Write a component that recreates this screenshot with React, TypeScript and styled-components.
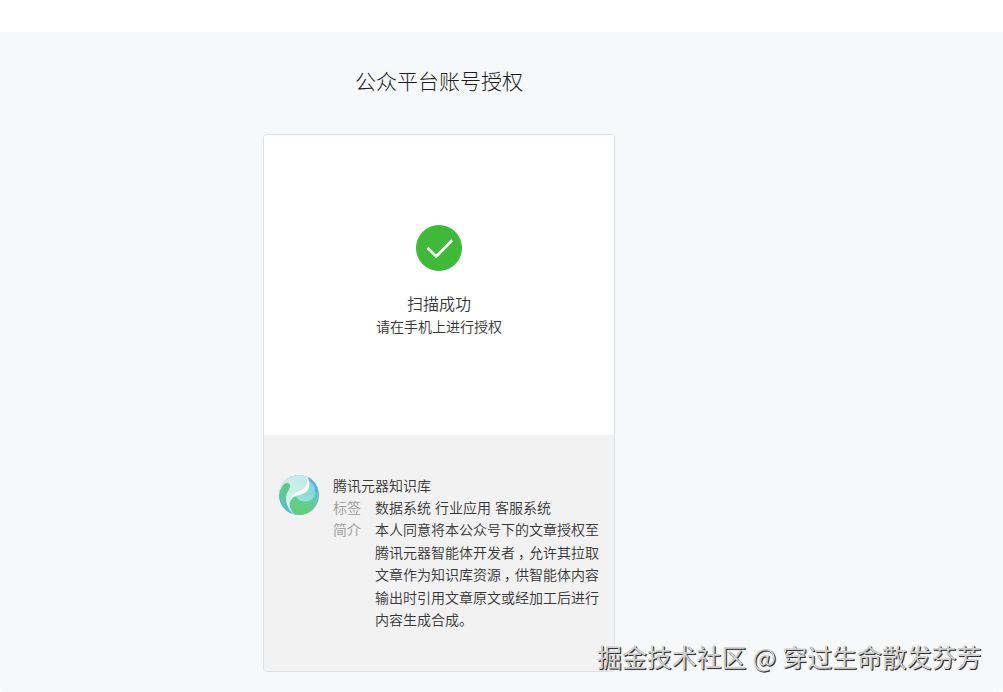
import React from "react";
import styled, { createGlobalStyle } from "styled-components";

const GlobalStyle = createGlobalStyle`
  * { box-sizing: border-box; }
  body {
    margin: 0;
    background: #fff;
    color: #353535;
    font-family: "Noto Sans CJK SC", sans-serif;
    font-size: 14px;
    line-height: 22.4px;
    font-weight: 350;
    overflow: hidden;
  }
`;

const Screen = styled.div`
  position: relative;
  width: 1003px;
  height: 692px;
  padding-top: 32px;
`;

const Page = styled.main`
  display: flex;
  flex-direction: column;
  align-items: center;
  height: 660px;
  padding-right: 125px;
  background: #f6f8f9;
  border-radius: 0 0 6px 6px;
`;

const Title = styled.h1`
  margin: 31px 0 37px;
  color: #1c1c1c;
  font-size: 21px;
  line-height: 34px;
  font-weight: 300;
`;

const Card = styled.section`
  display: flex;
  flex-direction: column;
  width: 352px;
  height: 538px;
  border: 1px solid #dddfe0;
  border-radius: 4px;
  overflow: hidden;
`;

const Result = styled.div`
  display: flex;
  flex-direction: column;
  align-items: center;
  height: 300px;
  padding-top: 90px;
  background: #fff;
`;

const CheckIcon = styled.svg`
  width: 46px;
  height: 46px;
  margin-bottom: 20px;
`;

const ResultTitle = styled.p`
  margin: 0;
  font-size: 16px;
  line-height: 24px;
`;

const ResultHint = styled.p`
  margin: 0;
  line-height: 22px;
`;

const Account = styled.div`
  display: flex;
  flex: 1;
  gap: 14px;
  padding: 40px 0 0 15px;
  background: #f2f2f2;
`;

const Logo = styled.svg`
  flex: none;
  width: 40px;
  height: 40px;
`;

const Details = styled.div`
  display: flex;
  flex-direction: column;
  margin-top: -1.5px;
  white-space: nowrap;
`;

const DetailRow = styled.div`
  display: flex;
  gap: 14px;
`;

const Label = styled.span`
  width: 28px;
  color: #9a9a9a;
`;

const Value = styled.div`
  word-spacing: 0.9px;
`;

const Comma = styled.span`
  padding: 0 4px 0 3px;
  font-feature-settings: "halt";
`;

const Watermark = styled.div`
  position: absolute;
  left: 597px;
  top: 638px;
  font-size: 24.9px;
  line-height: 36px;
  font-weight: 400;
  word-spacing: 0.6px;
  white-space: nowrap;
  color: #d0d0d0;
  text-shadow: 1px 1px 0 #333, 1px 1px 1px rgba(0, 0, 0, 0.5);
`;

const intro = [
  "本人同意将本公众号下的文章授权至",
  "腾讯元器智能体开发者，允许其拉取",
  "文章作为知识库资源，供智能体内容",
  "输出时引用文章原文或经加工后进行",
  "内容生成合成。",
];

function IntroLine({ text }: { text: string }) {
  const [before, after] = text.split("，");
  return (
    <div>
      {before}
      {after && <Comma>，</Comma>}
      {after}
    </div>
  );
}

function AccountLogo() {
  return (
    <Logo viewBox="0 0 40 40">
      <defs>
        <linearGradient id="rim" x1="0" y1="1" x2="1" y2="0">
          <stop offset="0.3" stopColor="#5cc4c0" />
          <stop offset="0.8" stopColor="#58afe2" />
        </linearGradient>
        <linearGradient id="leaf" x1="0.3" y1="1" x2="0.8" y2="0">
          <stop offset="0.2" stopColor="#62cf78" />
          <stop offset="1" stopColor="#5fcabf" />
        </linearGradient>
        <linearGradient id="mist" x1="0" y1="1" x2="1" y2="0">
          <stop offset="0" stopColor="#ddf5e4" />
          <stop offset="1" stopColor="#bde9ea" />
        </linearGradient>
        <linearGradient id="pool" x1="0" y1="1" x2="1" y2="0">
          <stop offset="0" stopColor="#a0e3cd" />
          <stop offset="1" stopColor="#79d3e2" />
        </linearGradient>
        <linearGradient id="edge" x1="0" y1="0" x2="0" y2="1">
          <stop offset="0" stopColor="#62c980" />
          <stop offset="0.45" stopColor="#5dc7a0" />
          <stop offset="1" stopColor="#58b4e4" />
        </linearGradient>
        <clipPath id="disc"><circle cx="20" cy="20" r="20" /></clipPath>
      </defs>
      <g clipPath="url(#disc)">
        <rect width="40" height="40" fill="url(#rim)" />
        <path d="M0 0H27C31 5 32 13 26 17C20 19 12 20 11 27C10 32 12 36 16 40H8L0 20Z" fill="url(#mist)" />
        <path d="M11 28C13 19 21 22 24 17H39C40 31 31 40 20 40C14 38 11 34 11 28Z" fill="url(#leaf)" />
        <path d="M27 5C33 6 37 12 36 18C35 25 29 28 23 26C19 25 18 22 16 21L27 15Z" fill="url(#pool)" />
        <path d="M3 12C5 7 10 7 11 10C12 14 7 17 7 23C7 30 10 35 15 39.5C6 38 0 30 0 20Q0 16 3 12Z" fill="url(#edge)" />
        <path d="M27 1C31.5 5 31.5 13 27.5 16.5C23 20.5 17 20 14 22.5C12 24.5 11.5 26 11.5 28C10.5 23 14 18.5 19 17C26 15 29.5 10 27 1Z" fill="#fff" />
      </g>
    </Logo>
  );
}

export default function App() {
  return (
    <>
      <GlobalStyle />
      <Screen>
        <Page>
          <Title>公众平台账号授权</Title>
          <Card>
            <Result>
              <CheckIcon viewBox="0 0 46 46">
                <circle cx="23" cy="23" r="23" fill="#3eb938" />
                <path d="M11.5 22.8L20.3 31.4L36.3 15.2" fill="none" stroke="#fff" strokeWidth="2.8" />
              </CheckIcon>
              <ResultTitle>扫描成功</ResultTitle>
              <ResultHint>请在手机上进行授权</ResultHint>
            </Result>
            <Account>
              <AccountLogo />
              <Details>
                <div>腾讯元器知识库</div>
                <DetailRow>
                  <Label>标签</Label>
                  <Value>数据系统 行业应用 客服系统</Value>
                </DetailRow>
                <DetailRow>
                  <Label>简介</Label>
                  <Value>
                    {intro.map((line) => (
                      <IntroLine key={line} text={line} />
                    ))}
                  </Value>
                </DetailRow>
              </Details>
            </Account>
          </Card>
        </Page>
        <Watermark>掘金技术社区 @ 穿过生命散发芬芳</Watermark>
      </Screen>
    </>
  );
}
